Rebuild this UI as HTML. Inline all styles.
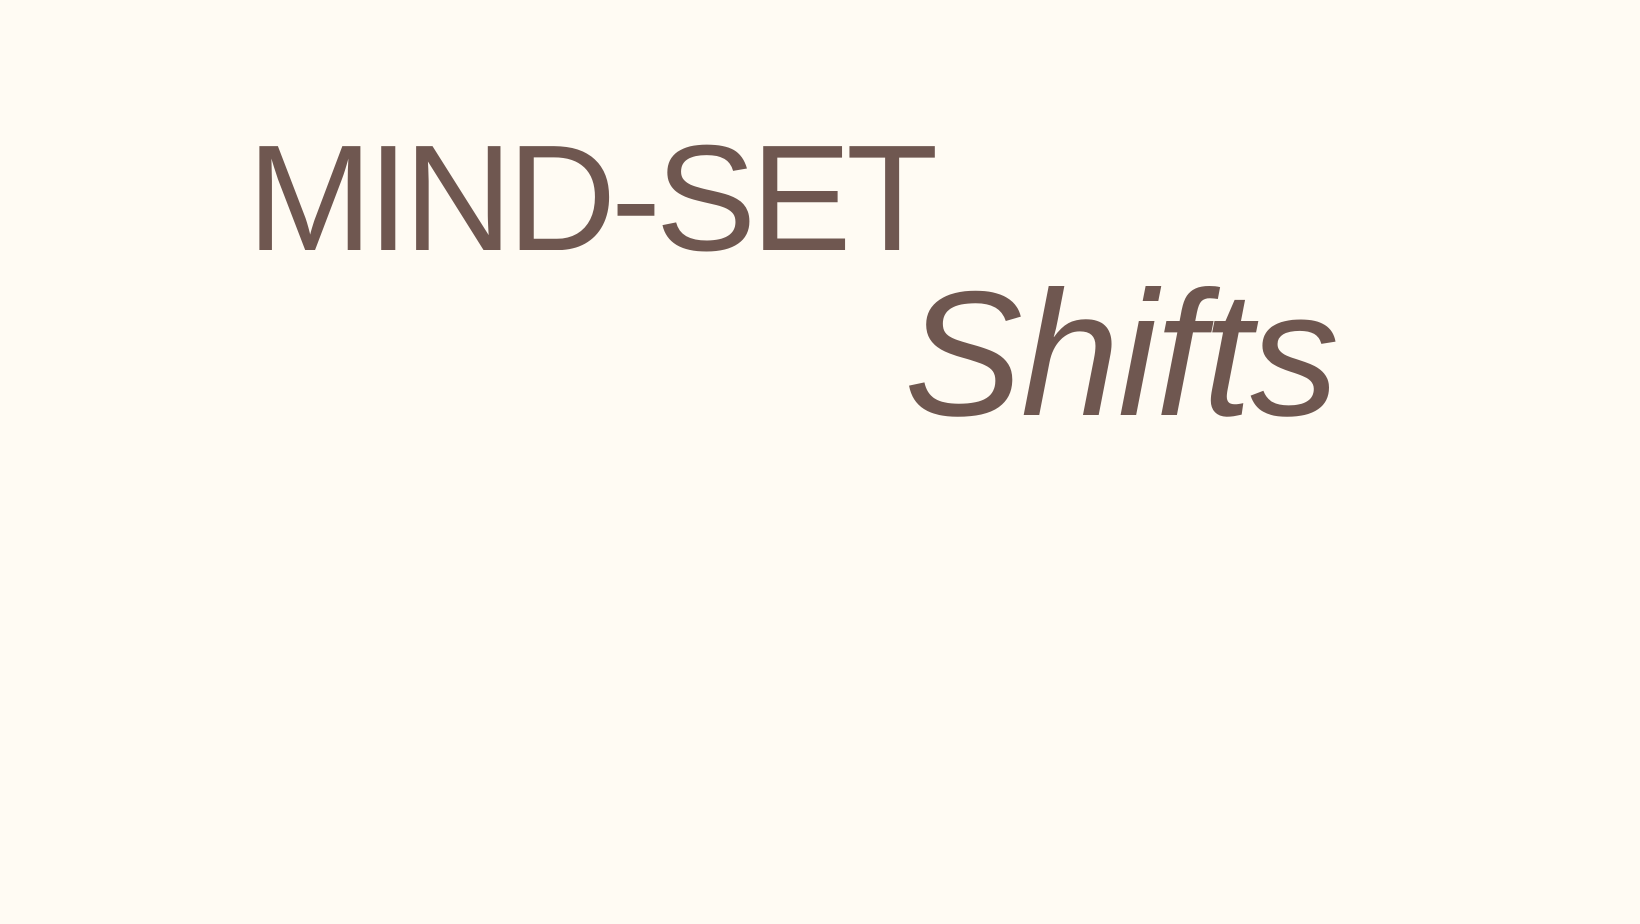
<!DOCTYPE html>
<html><head><meta charset="utf-8"><style>
html,body{margin:0;padding:0;width:1640px;height:924px;background:#fffbf3;overflow:hidden}
.t{position:absolute;font-family:"Liberation Sans",sans-serif;color:#6f5750;line-height:1;white-space:nowrap}
#a{left:247px;top:122px;font-size:151px;letter-spacing:-5.5px}
#b{left:904px;top:265px;font-size:178px;font-style:italic;letter-spacing:-2px}
</style></head><body>
<div class="t" id="a">MIND-SET</div>
<div class="t" id="b">Shifts</div>
</body></html>
